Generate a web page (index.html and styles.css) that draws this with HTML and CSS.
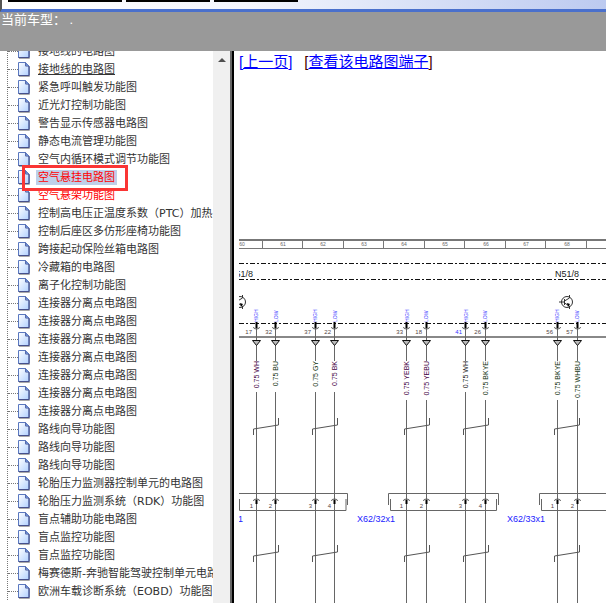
FILE: index.html
```
<!DOCTYPE html>
<html lang="zh-CN">
<head>
  <meta charset="utf-8">
  <title>电路图</title>
  <link rel="stylesheet" href="styles.css">
</head>
<body>
  <svg class="defs">
    <defs>
      <linearGradient id="paper" x1="0" y1="0" x2="1" y2="1">
        <stop offset="0" stop-color="#fff"/>
        <stop offset="1" stop-color="#b0d0ff"/>
      </linearGradient>
      <symbol id="page" viewBox="0 0 12 15">
        <path d="M1 14.500h10.500V5" fill="none" stroke="#aaa"/>
        <path d="M.5.5h7l3.500 3.500v9.500H.5z" fill="url(#paper)" stroke="#5a78c0"/>
        <path d="M7.500.5v3.500H11v9.500H.5" fill="none" stroke="#46508c"/>
        <path d="M7.500.5v3.500h3.500z" fill="#6a88cc"/>
      </symbol>
      <g id="wire">
        <path d="M0 327v34M0 400v203" stroke="#666"/>
        <path d="M0 322v6M0 500v4" stroke="#000" stroke-width="2"/>
        <path d="M-3 327q0 2 3 2t3-2M-3 501q0-2 3-2t3 2" fill="none" stroke="#555"/>
        <path d="M-4 340.500h8l-4 5z" fill="#bbb" stroke="#111"/>
      </g>
      <g id="twist">
        <path d="M-2.500 435v-6l25-4v-7M-2.500 562v-6l25-4v-7" fill="none" stroke="#555"/>
      </g>
      <g id="transistor" fill="none" stroke="#333">
        <circle r="5.500"/>
        <path d="M-8 0h5M-2.500-3v6M-2.500-1l5-3v-3M-2.500 1l5 3v3"/>
        <path d="M0 1l3 1-2 3z" fill="#000" stroke="none"/>
      </g>
    </defs>
  </svg>

  <header>
    <div class="tabs">
      <span class="tab wide"></span>
      <span class="tab"></span>
      <span class="tab"></span>
    </div>
    <p class="model">当前车型： .</p>
  </header>

  <div class="content">
    <nav class="tree">
      <ul>
        <li><svg class="icon"><use href="#page"/></svg><a href="#">接地线的电路图</a></li>
        <li><svg class="icon"><use href="#page"/></svg><a href="#" class="hover">接地线的电路图</a></li>
        <li><svg class="icon"><use href="#page"/></svg><a href="#">紧急呼叫触发功能图</a></li>
        <li><svg class="icon"><use href="#page"/></svg><a href="#">近光灯控制功能图</a></li>
        <li><svg class="icon"><use href="#page"/></svg><a href="#">警告显示传感器电路图</a></li>
        <li><svg class="icon"><use href="#page"/></svg><a href="#">静态电流管理功能图</a></li>
        <li><svg class="icon"><use href="#page"/></svg><a href="#">空气内循环模式调节功能图</a></li>
        <li class="marked"><svg class="icon"><use href="#page"/></svg><a href="#" class="red selected">空气悬挂电路图</a></li>
        <li><svg class="icon"><use href="#page"/></svg><a href="#" class="red">空气悬架功能图</a></li>
        <li><svg class="icon"><use href="#page"/></svg><a href="#">控制高电压正温度系数（PTC）加热</a></li>
        <li><svg class="icon"><use href="#page"/></svg><a href="#">控制后座区多仿形座椅功能图</a></li>
        <li><svg class="icon"><use href="#page"/></svg><a href="#">跨接起动保险丝箱电路图</a></li>
        <li><svg class="icon"><use href="#page"/></svg><a href="#">冷藏箱的电路图</a></li>
        <li><svg class="icon"><use href="#page"/></svg><a href="#">离子化控制功能图</a></li>
        <li><svg class="icon"><use href="#page"/></svg><a href="#">连接器分离点电路图</a></li>
        <li><svg class="icon"><use href="#page"/></svg><a href="#">连接器分离点电路图</a></li>
        <li><svg class="icon"><use href="#page"/></svg><a href="#">连接器分离点电路图</a></li>
        <li><svg class="icon"><use href="#page"/></svg><a href="#">连接器分离点电路图</a></li>
        <li><svg class="icon"><use href="#page"/></svg><a href="#">连接器分离点电路图</a></li>
        <li><svg class="icon"><use href="#page"/></svg><a href="#">连接器分离点电路图</a></li>
        <li><svg class="icon"><use href="#page"/></svg><a href="#">连接器分离点电路图</a></li>
        <li><svg class="icon"><use href="#page"/></svg><a href="#">路线向导功能图</a></li>
        <li><svg class="icon"><use href="#page"/></svg><a href="#">路线向导功能图</a></li>
        <li><svg class="icon"><use href="#page"/></svg><a href="#">路线向导功能图</a></li>
        <li><svg class="icon"><use href="#page"/></svg><a href="#">轮胎压力监测器控制单元的电路图</a></li>
        <li><svg class="icon"><use href="#page"/></svg><a href="#">轮胎压力监测系统（RDK）功能图</a></li>
        <li><svg class="icon"><use href="#page"/></svg><a href="#">盲点辅助功能电路图</a></li>
        <li><svg class="icon"><use href="#page"/></svg><a href="#">盲点监控功能图</a></li>
        <li><svg class="icon"><use href="#page"/></svg><a href="#">盲点监控功能图</a></li>
        <li><svg class="icon"><use href="#page"/></svg><a href="#">梅赛德斯-奔驰智能驾驶控制单元电路图</a></li>
        <li><svg class="icon"><use href="#page"/></svg><a href="#">欧洲车载诊断系统（EOBD）功能图</a></li>
      </ul>
    </nav>
    <div class="scrollbar"><svg width="8" height="4"><path d="M0 4l4-4 4 4z" fill="#505050"/></svg></div>

    <main>
      <p class="links">
        <a href="#">[上一页]</a>
        <span>[<a href="#">查看该电路图端子</a>]</span>
      </p>

      <svg class="diagram" width="367" height="365" viewBox="239 238 367 365">
        <!-- column ruler -->
        <path d="M239 240h367" stroke="#777" stroke-width="2"/>
        <path d="M239 248.500h367M262.500 240v8M302.500 240v8M343.500 240v8M383.500 240v8M424.500 240v8M464.500 240v8M505.500 240v8M545.500 240v8M586.500 240v8" stroke="#777"/>
        <g class="ruler">
          <text x="242" y="246">60</text>
          <text x="283" y="246">61</text>
          <text x="323" y="246">62</text>
          <text x="364" y="246">63</text>
          <text x="404" y="246">64</text>
          <text x="445" y="246">65</text>
          <text x="486" y="246">66</text>
          <text x="526" y="246">67</text>
          <text x="567" y="246">68</text>
        </g>

        <!-- control unit N51/8 -->
        <path d="M239 263.500h367M239 279.500h367M239 323.500h367" stroke="#111" stroke-dasharray="5 2 2 2"/>
        <path d="M239 337h367" stroke="#888" stroke-width="2"/>
        <text class="unit" x="253" y="277" text-anchor="end">N51/8</text>
        <text class="unit" x="579" y="277" text-anchor="end">N51/8</text>
        <use href="#transistor" x="240" y="302"/>
        <use href="#transistor" x="567" y="302"/>

        <!-- connectors -->
        <path d="M239 493.500h108.500V505M239.500 499v11.500h106.500V499" class="plug"/>
        <path d="M388.500 505v-11.500h110V505M390.500 499v11.500h106V499" class="plug"/>
        <path d="M606 493.500h-66.500V505M541.500 499v11.500H606" class="plug"/>
        <text class="plug-name" x="243" y="522" text-anchor="end">X62/31x1</text>
        <text class="plug-name" x="357" y="522">X62/32x1</text>
        <text class="plug-name" x="507" y="522">X62/33x1</text>

        <!-- wires -->
        <use href="#wire" x="256.500"/>
        <use href="#wire" x="275.500"/>
        <use href="#wire" x="315.500"/>
        <use href="#wire" x="334.500"/>
        <use href="#wire" x="406.500"/>
        <use href="#wire" x="426.500"/>
        <use href="#wire" x="465.500"/>
        <use href="#wire" x="485.500"/>
        <use href="#wire" x="557.500"/>
        <use href="#wire" x="577.500"/>
        <path d="M256.500 392v8M275.500 392v8M315.500 392v8M334.500 392v8M465.500 392v8" stroke="#666"/>
        <use href="#twist" x="256"/>
        <use href="#twist" x="315"/>
        <use href="#twist" x="407"/>
        <use href="#twist" x="466"/>
        <use href="#twist" x="557"/>

        <g class="signal">
          <text transform="translate(258 322) rotate(-90)">HIGH</text>
          <text transform="translate(278 322) rotate(-90)">LOW</text>
          <text transform="translate(317 322) rotate(-90)">HIGH</text>
          <text transform="translate(337 322) rotate(-90)">LOW</text>
          <text transform="translate(409 322) rotate(-90)">HIGH</text>
          <text transform="translate(428 322) rotate(-90)">LOW</text>
          <text transform="translate(468 322) rotate(-90)">HIGH</text>
          <text transform="translate(487 322) rotate(-90)">LOW</text>
          <text transform="translate(559 322) rotate(-90)">HIGH</text>
          <text transform="translate(579 322) rotate(-90)">LOW</text>
        </g>
        <g class="pin">
          <text x="252" y="334">17</text>
          <text x="272" y="334">32</text>
          <text x="311" y="334">37</text>
          <text x="331" y="334">22</text>
          <text x="403" y="334">33</text>
          <text x="422" y="334">18</text>
          <text x="462" y="334" class="blue">41</text>
          <text x="481" y="334">26</text>
          <text x="553" y="334">56</text>
          <text x="573" y="334">57</text>
          <text x="253" y="508">1</text>
          <text x="272" y="508">2</text>
          <text x="312" y="508">3</text>
          <text x="331" y="508">4</text>
          <text x="403" y="508">1</text>
          <text x="423" y="508">2</text>
          <text x="462" y="508">3</text>
          <text x="482" y="508">4</text>
          <text x="554" y="508">1</text>
          <text x="574" y="508">2</text>
        </g>
        <g class="gauge">
          <text transform="translate(259 361) rotate(-90)" class="purple">0.75 WH</text>
          <text transform="translate(278 361) rotate(-90)" class="green">0.75 BU</text>
          <text transform="translate(318 361) rotate(-90)" class="green">0.75 GY</text>
          <text transform="translate(337 361) rotate(-90)" class="purple">0.75 BK</text>
          <text transform="translate(409 361) rotate(-90)" class="purple">0.75 YEBK</text>
          <text transform="translate(429 361) rotate(-90)" class="purple">0.75 YEBU</text>
          <text transform="translate(468 361) rotate(-90)">0.75 WH</text>
          <text transform="translate(488 361) rotate(-90)" class="green">0.75 BKYE</text>
          <text transform="translate(560 361) rotate(-90)" class="green">0.75 BKYE</text>
          <text transform="translate(580 361) rotate(-90)" class="green">0.75 WHBU</text>
        </g>
      </svg>
    </main>
  </div>
</body>
</html>
```

FILE: styles.css
```
*, *::before, *::after {
  box-sizing: border-box;
}

body {
  margin: 0;
  height: 100vh;
  overflow: hidden;
  display: flex;
  flex-direction: column;
  background: #fff;
  font-family: "Liberation Sans", "Noto Sans CJK SC", sans-serif;
}

.defs {
  position: absolute;
  width: 0;
  height: 0;
}

.tabs {
  display: flex;
  gap: 4px;
  height: 12px;
  padding-left: 6px;
  border-left: 2px solid #555;
  border-bottom: 3px solid #4a70cc;
  background: linear-gradient(to right, #fff, #f4f6fd 40%, #bccaf0);
}

.tab {
  width: 84px;
  height: 2px;
  background: #000;
}

.tab.wide {
  width: 114px;
}

.model {
  margin: 0;
  padding-left: 1px;
  height: 39px;
  background: #999;
  color: #fff;
  font-size: 13px;
  line-height: 16px;
}

.content {
  flex: 1;
  display: flex;
  min-height: 0;
}

.tree {
  flex: none;
  width: 213px;
  overflow: hidden;
}

.tree ul {
  list-style: none;
  margin: -9px 0 0 7px;
  padding: 0;
  border-left: 1px dotted #777;
}

.tree li {
  position: relative;
  display: flex;
  align-items: center;
  height: 18px;
  white-space: nowrap;
}

.tree li::before {
  content: "";
  flex: none;
  width: 10px;
  border-top: 1px dotted #777;
}

.icon {
  flex: none;
  width: 12px;
  height: 15px;
  margin-right: 6px;
}

.tree a {
  flex: none;
  padding: 0 2px;
  color: #333;
  font-family: "DejaVu Sans", "Noto Sans CJK SC", sans-serif;
  font-size: 11px;
  line-height: 15px;
  text-decoration: none;
}

.tree a.hover {
  text-decoration: underline;
}

.tree a.red {
  color: #f00;
}

.tree a.selected {
  background: #bfd0ea;
}

.marked::after {
  content: "";
  position: absolute;
  left: 14px;
  top: -3px;
  width: 106px;
  height: 26px;
  border: 3px solid #fa3534;
  z-index: 1;
}

.scrollbar {
  flex: none;
  width: 19px;
  padding-left: 5px;
  border-right: 2px solid #666;
  background: #f0f0f0;
}

.scrollbar svg {
  display: block;
  margin-top: 7px;
}

main {
  flex: 1;
  min-width: 0;
  overflow: hidden;
  padding-left: 5px;
  border-left: 2px solid #000;
}

.links {
  display: flex;
  gap: 12px;
  margin: 0;
  height: 187px;
  font-size: 15px;
  line-height: 22px;
  color: #400;
}

.links a {
  color: #00f;
}

.diagram {
  display: block;
  font-size: 6px;
}

.ruler {
  fill: #666;
  text-anchor: middle;
  font-size: 5px;
}

.unit {
  fill: #222;
  font-size: 9px;
}

.plug {
  fill: none;
  stroke: #666;
}

.plug-name {
  fill: #22f;
  font-size: 9px;
}

.signal {
  fill: #44f;
  font-size: 5px;
}

.pin {
  fill: #544;
  text-anchor: end;
}

.pin .blue {
  fill: #33f;
}

.gauge {
  fill: #222;
  text-anchor: end;
  font-size: 7px;
}

.gauge .purple {
  fill: #404;
}

.gauge .green {
  fill: #131;
}
```
